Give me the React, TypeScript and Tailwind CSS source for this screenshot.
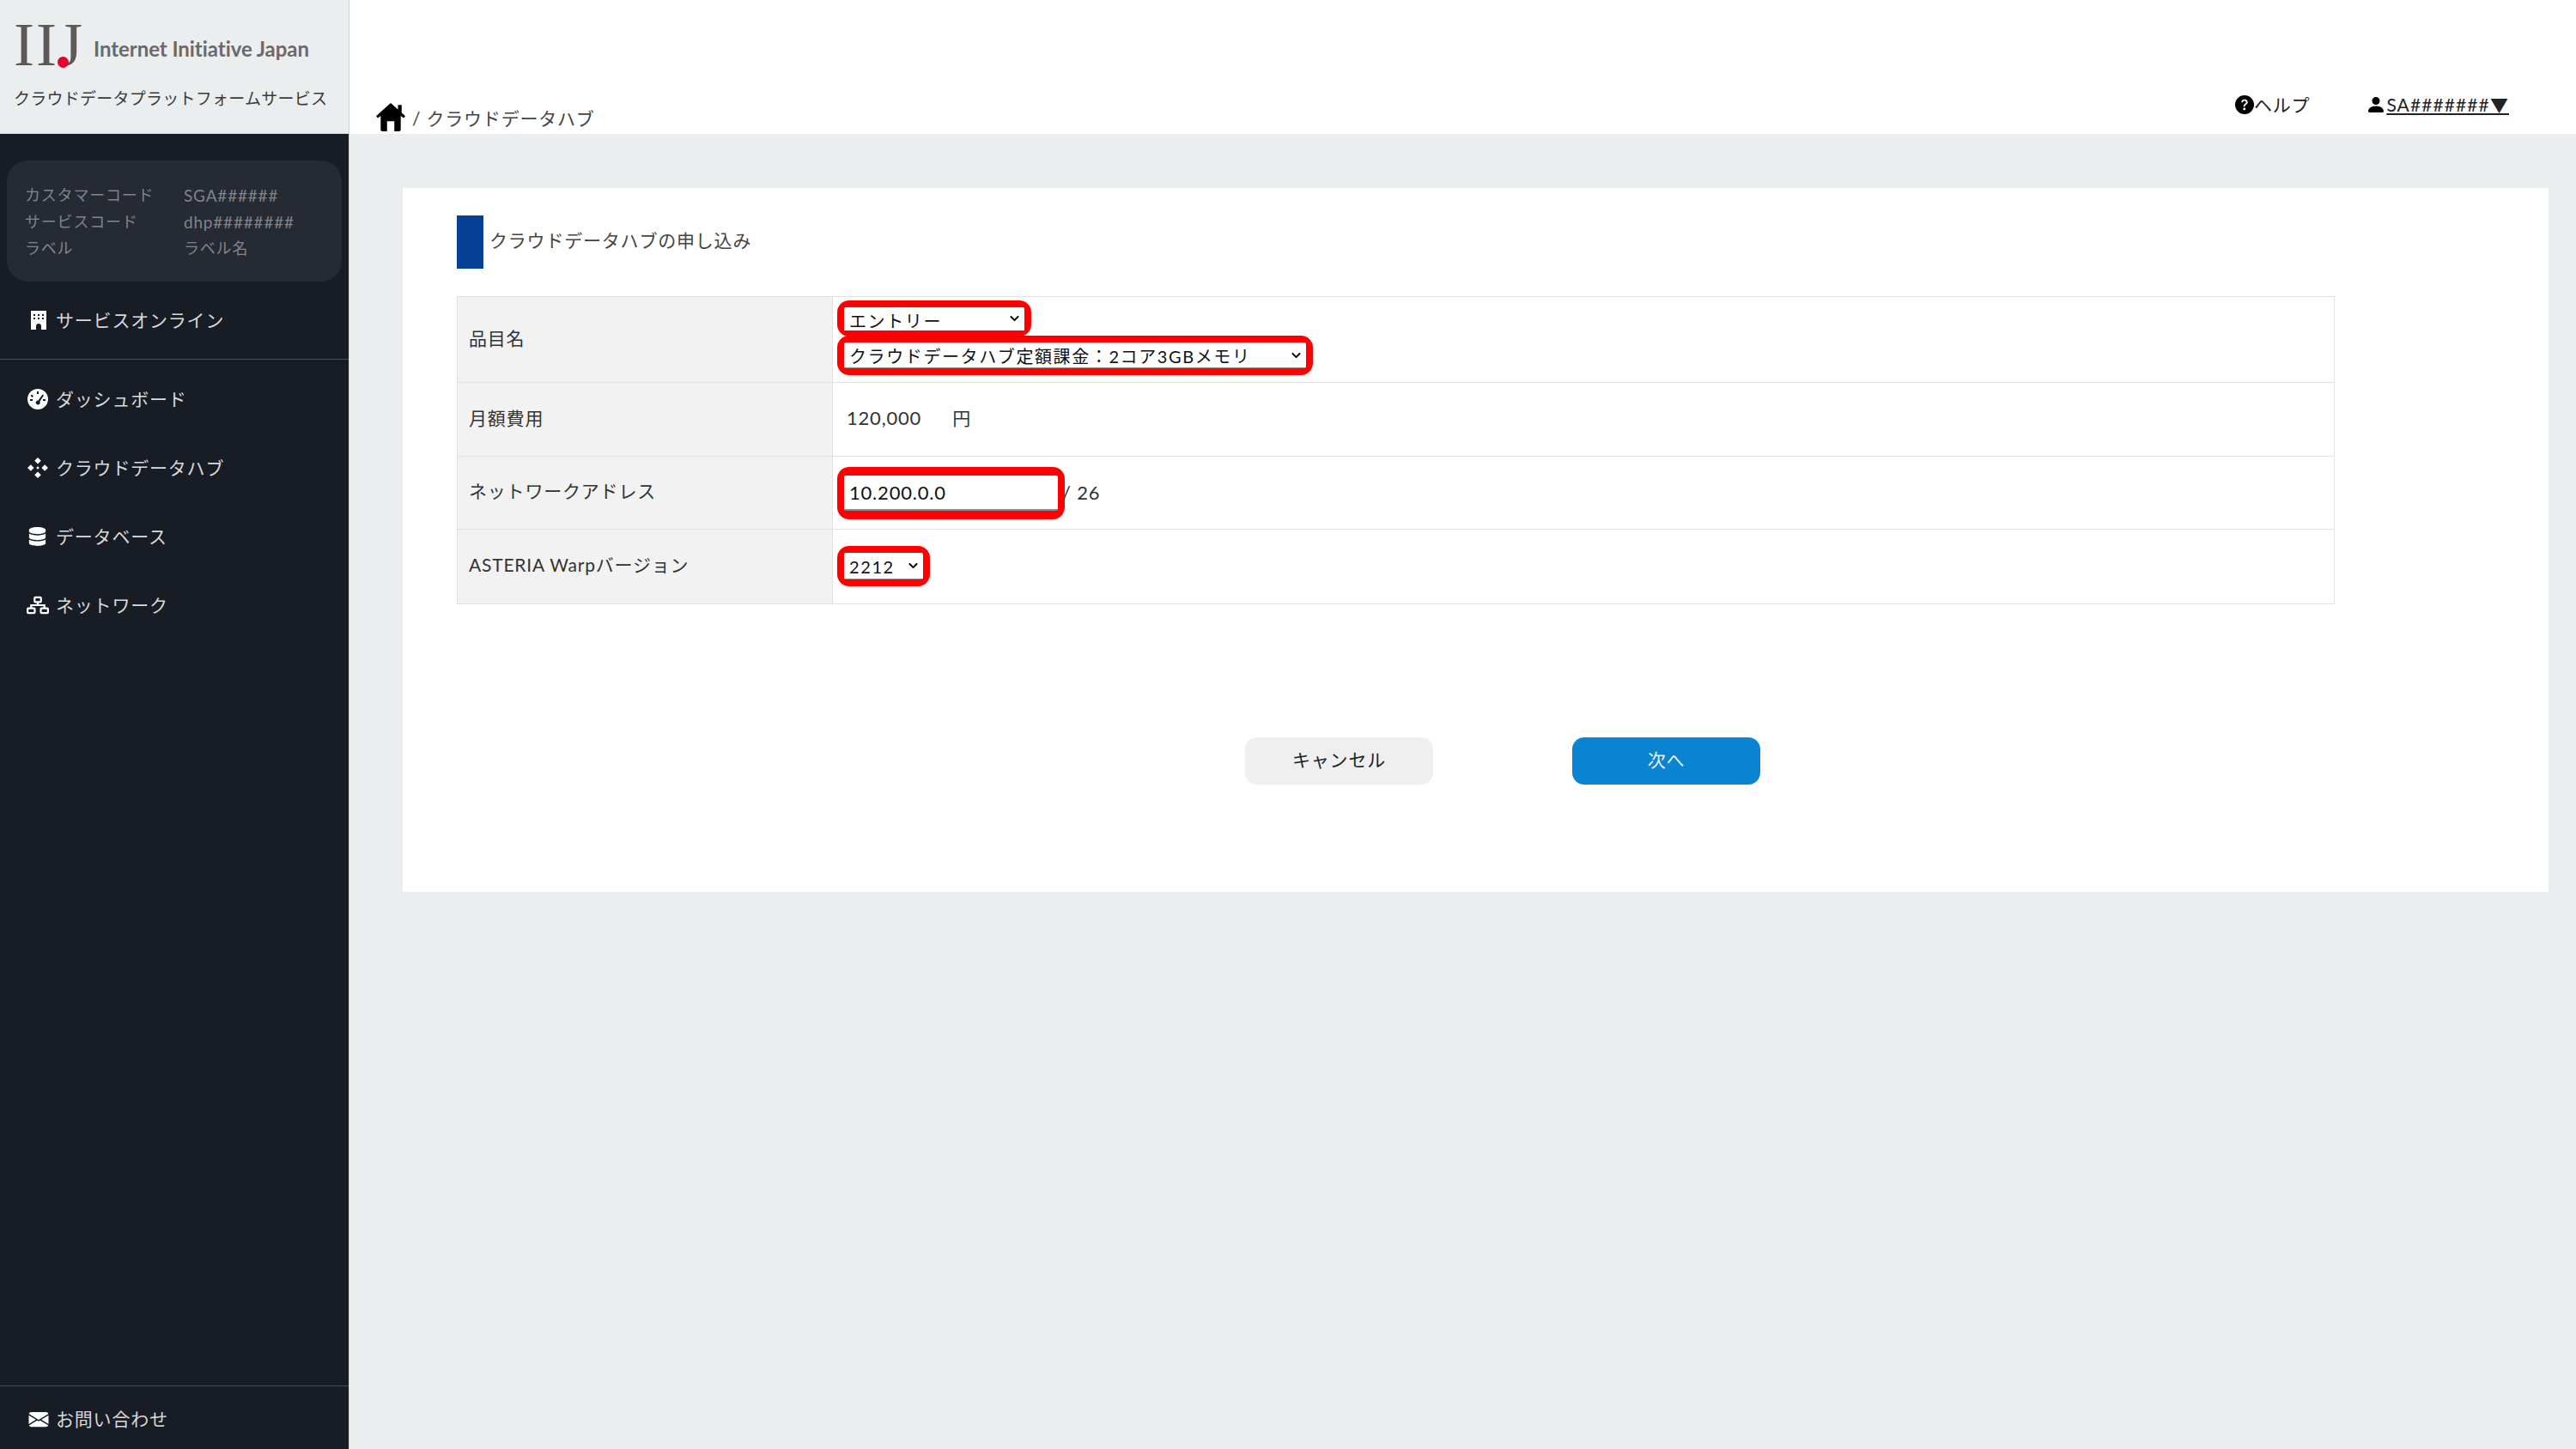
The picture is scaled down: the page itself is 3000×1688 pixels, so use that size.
import { BsEnvelopeFill, BsPersonFill, BsQuestionCircleFill } from 'react-icons/bs';
import { FaChevronDown, FaDatabase } from 'react-icons/fa';

const font = "font-['Lato','Noto_Sans_CJK_JP',sans-serif]";

function BuildingIcon() {
  return (
    <svg viewBox="0 0 20 24" className="h-[24px] w-[20px]" fill="currentColor">
      <path
        fillRule="evenodd"
        d="M1 1h18v22h-6v-4a3 3 0 0 0-6 0v4H1zM4 5v2h2V5zm5 0v2h2V5zm5 0v2h2V5zM4 9v2h2V9zm5 0v2h2V9zm5 0v2h2V9z"
      />
    </svg>
  );
}

function GaugeIcon() {
  return (
    <svg viewBox="0 0 24 24" className="h-[24px] w-[24px]" fill="currentColor">
      <path
        fillRule="evenodd"
        d="M12 0a12 12 0 1 1 0 24a12 12 0 0 1 0-24zM11 3v3h2V3zM5 6.5 3.6 7.9l2 2L7 8.500zM3 12v2h3v-2zM18 12v2h3v-2zM17.500 6.400l-5 7.100a2.500 2.500 0 1 0 1.900 1.300l4.600-7.300z"
      />
    </svg>
  );
}

function HubIcon() {
  return (
    <svg viewBox="0 0 24 24" className="h-[24px] w-[24px]" fill="currentColor">
      <path d="M12 0l3.800 3.800L12 7.600 8.200 3.800zM12 16.400l3.800 3.800L12 24l-3.800-3.800zM0 12l3.800-3.800L7.600 12l-3.800 3.800zM16.400 12l3.800-3.800L24 12l-3.800 3.800z" />
      <path d="M12 10.200l1.800 1.800-1.800 1.800-1.800-1.800z" />
    </svg>
  );
}

function NetworkIcon() {
  return (
    <svg viewBox="0 0 28 22" className="h-[22px] w-[26px]" fill="none" stroke="currentColor" strokeWidth="2.4">
      <rect x="10" y="1.200" width="8" height="6" rx="1" />
      <rect x="1.200" y="14.800" width="9" height="6" rx="1" />
      <rect x="17.800" y="14.800" width="9" height="6" rx="1" />
      <path d="M14 7v4M5.700 15v-4h16.600v4" />
    </svg>
  );
}

function HomeIcon() {
  return (
    <svg viewBox="0 0 32 32" className="h-[34px] w-[36px] text-black" fill="currentColor">
      <path d="M16 1 24 8V3h4v8.500l4 3.800-1.800 2L27 15v15a2 2 0 0 1-2 2h-5V21h-8v11H7a2 2 0 0 1-2-2V15l-3.200 2.300L0 15.300z" />
    </svg>
  );
}

const navItems = [
  { label: 'ダッシュボード', icon: <GaugeIcon /> },
  { label: 'クラウドデータハブ', icon: <HubIcon /> },
  { label: 'データベース', icon: <FaDatabase className="h-[22px] w-[21px]" /> },
  { label: 'ネットワーク', icon: <NetworkIcon /> },
];

function Sidebar() {
  return (
    <aside className="flex w-[406px] shrink-0 flex-col bg-[#181c24] tracking-[0.8px]">
      <div className="h-[156px] border-b border-[#d5d8da] bg-[#ebeeef] pl-[16px] pt-[20px] tracking-normal">
        <div className="flex items-center">
          <div className="relative h-[64px] w-[84px] font-['Liberation_Serif',serif] text-[72px] leading-[64px] tracking-[2px] text-[#5d5955]">
            IIJ
            <span className="absolute left-[51px] top-[46px] h-[13px] w-[13px] rounded-full bg-[#e4002b]" />
          </div>
          <span className="ml-[9px] mt-[9px] text-[24px] font-bold tracking-[-0.05px] text-[#6a6a6a]">Internet Initiative Japan</span>
        </div>
        <div className="mt-[17px] text-[19px] leading-[28px] tracking-[0.25px] text-[#3a3a3a]">クラウドデータプラットフォームサービス</div>
      </div>
      <div className="mx-[8px] mt-[31px] h-[141px] rounded-[24px] bg-[#262a33] pl-[21px] pt-[25px] text-[18px] leading-[31px] text-[#81848a]">
        <div className="grid grid-cols-[185px_1fr]">
          <span>カスタマーコード</span>
          <span className="text-[19px]">SGA######</span>
          <span>サービスコード</span>
          <span className="text-[19px]">dhp########</span>
          <span>ラベル</span>
          <span>ラベル名</span>
        </div>
      </div>
      <div className="flex h-[91px] items-center gap-[10px] border-b border-[#4a4d52] pl-[35px] text-[21px] text-[#d8d9da]">
        <span className="text-white"><BuildingIcon /></span>
        <span>サービスオンライン</span>
      </div>
      <nav className="flex flex-col pt-[6px]">
        {navItems.map((item) => (
          <div key={item.label} className="flex h-[80px] items-center text-[21px] text-[#d8d9da]">
            <span className="flex w-[65px] justify-center pl-[24px] pr-[2px] text-white">{item.icon}</span>
            <span>{item.label}</span>
          </div>
        ))}
      </nav>
      <div className="mt-auto flex h-[74px] items-center gap-[8px] border-t border-[#4a4d52] pl-[33px] pt-[3px] text-[21px] text-[#d8d9da]">
        <BsEnvelopeFill className="h-[23px] w-[24px] text-white" />
        <span>お問い合わせ</span>
      </div>
    </aside>
  );
}

function Header() {
  return (
    <header className="flex h-[156px] items-end justify-between bg-white pb-[3px] pl-[30px] pr-[78px] tracking-[0.8px]">
      <div className="flex items-end text-[21px] leading-[30px] text-[#444]">
        <HomeIcon />
        <span className="ml-[7px]">/ クラウドデータハブ</span>
      </div>
      <div className="mb-[17px] flex items-center text-[21px] leading-[26px] text-[#222]">
        <div className="flex items-center">
          <BsQuestionCircleFill className="h-[22px] w-[22px] text-black" />
          <span>ヘルプ</span>
        </div>
        <div className="ml-[65px] flex items-center underline">
          <BsPersonFill className="h-[28px] w-[24px] text-black" />
          <span className="tracking-[1.1px]">SA#######▼</span>
        </div>
      </div>
    </header>
  );
}

function RedSelect({ width, height, value }: { width: string; height: string; value: string }) {
  return (
    <div className={`relative rounded-[14px] bg-[#ff0000] px-[8px] py-[8px] ${width} ${height}`}>
      <div className="h-full rounded-[2px] border-b-2 border-[#8a8f8f] bg-white">
        <select
          defaultValue={value}
          className="h-[calc(100%-1px)] w-full appearance-none bg-white pl-[6px] text-[20px] leading-none tracking-[1.6px] text-[#111]"
        >
          <option value={value}>{value}</option>
        </select>
      </div>
      <FaChevronDown className="pointer-events-none absolute right-[13px] top-1/2 h-[12px] w-[13px] -translate-y-1/2 text-black" />
    </div>
  );
}

const labelCell = 'border border-[#dfe3e6] bg-[#f2f2f2] pb-[4px] pl-[13px] text-left font-normal text-[#333]';
const fieldCell = 'border border-[#dfe3e6] pl-[5px]';

function ApplyForm() {
  return (
    <section className="ml-[62px] mr-[32px] mt-[63px] h-[820px] bg-white pl-[63px] pt-[32px] tracking-[0.8px]">
      <div className="flex h-[62px] items-center gap-[7px] text-[21px] text-[#444]">
        <div className="h-[62px] w-[31px] bg-[#063f95]" />
        <span className="pb-[5px]">クラウドデータハブの申し込み</span>
      </div>
      <table className="mt-[32px] w-[2187px] table-fixed border-collapse text-[21px]">
        <tbody>
          <tr className="h-[100px]">
            <th className={`${labelCell} w-[437px]`}>品目名</th>
            <td className={fieldCell}>
              <div className="flex flex-col items-start pb-[5px]">
                <RedSelect width="w-[226px]" height="h-[42px]" value="エントリー" />
                <div className="-mt-[1px]">
                  <RedSelect width="w-[554px]" height="h-[46px]" value="クラウドデータハブ定額課金：2コア3GBメモリ" />
                </div>
              </div>
            </td>
          </tr>
          <tr className="h-[86px]">
            <th className={labelCell}>月額費用</th>
            <td className="border border-[#dfe3e6] pb-[4px] pl-[16px] text-[#333]">
              <span className="text-[22px]">120,000</span>
              <span className="ml-[36px]">円</span>
            </td>
          </tr>
          <tr className="h-[85px]">
            <th className={labelCell}>ネットワークアドレス</th>
            <td className={fieldCell}>
              <div className="flex items-center text-[#333]">
                <div className="h-[61px] w-[265px] rounded-[14px] bg-[#ff0000] px-[8px] py-[10px]">
                  <input
                    defaultValue="10.200.0.0"
                    className="h-full w-full rounded-[2px] border-b-2 border-[#8a8f8f] bg-white px-[6px] text-[22px] text-[#111]"
                  />
                </div>
                <span className="-ml-[3px] pb-[2px] text-[22px]">/ 26</span>
              </div>
            </td>
          </tr>
          <tr className="h-[87px]">
            <th className={labelCell}>ASTERIA Warpバージョン</th>
            <td className={`${fieldCell} pb-[2px]`}>
              <RedSelect width="w-[108px]" height="h-[47px]" value="2212" />
            </td>
          </tr>
        </tbody>
      </table>
      <div className="ml-[918px] mt-[155px] flex gap-[162px] text-[21px]">
        <button className="h-[55px] w-[219px] rounded-[14px] bg-[#efefef] pb-[3px] text-[#222]">キャンセル</button>
        <button className="h-[55px] w-[219px] rounded-[14px] bg-[#0a84d2] pb-[3px] text-[#e8f3fb]">次へ</button>
      </div>
    </section>
  );
}

export default function App() {
  return (
    <div className={`flex h-[1688px] w-[3000px] overflow-hidden bg-[#ebeeef] ${font}`}>
      <Sidebar />
      <main className="flex-1 border-l border-[#cfd2d4]">
        <Header />
        <ApplyForm />
      </main>
    </div>
  );
}
